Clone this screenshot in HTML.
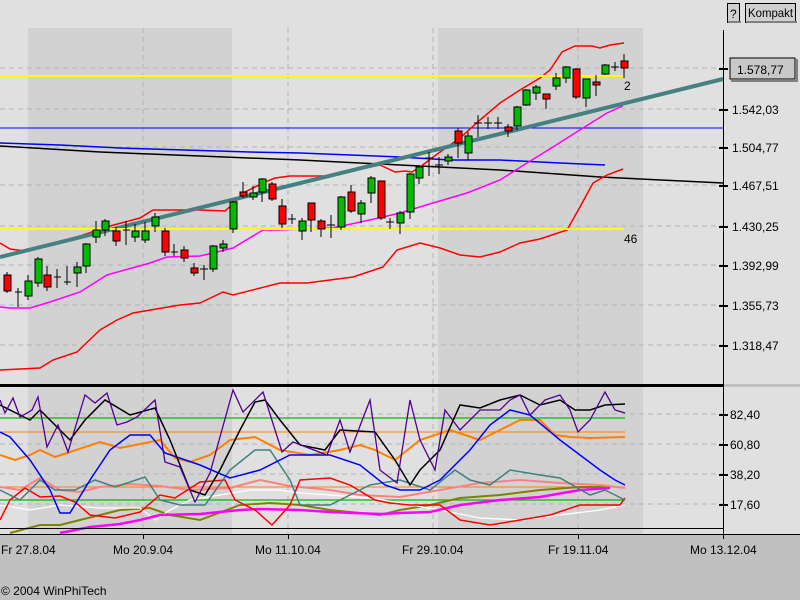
<!DOCTYPE html>
<html><head><meta charset="utf-8"><style>
html,body{margin:0;padding:0;width:800px;height:600px;overflow:hidden;background:#e0e0e0}
svg{display:block}
text{font-family:"Liberation Sans",sans-serif;font-size:12px;fill:#000}
</style></head><body>
<svg width="800" height="600" viewBox="0 0 800 600" shape-rendering="crispEdges">
<rect x="0" y="0" width="800" height="600" fill="#e0e0e0"/>
<rect x="28" y="28" width="204" height="506" fill="#d2d2d2"/>
<rect x="438" y="28" width="205" height="506" fill="#d2d2d2"/>
<rect x="0" y="535" width="800" height="65" fill="#c0c0c0"/>
<g stroke="#b4b4b4" stroke-dasharray="5,4" stroke-width="1">
<line x1="0" y1="68" x2="723" y2="68"/><line x1="0" y1="109" x2="723" y2="109"/><line x1="0" y1="147" x2="723" y2="147"/><line x1="0" y1="185" x2="723" y2="185"/><line x1="0" y1="226" x2="723" y2="226"/><line x1="0" y1="265" x2="723" y2="265"/><line x1="0" y1="305" x2="723" y2="305"/><line x1="0" y1="345" x2="723" y2="345"/>
<line x1="0" y1="414" x2="723" y2="414"/><line x1="0" y1="444" x2="723" y2="444"/><line x1="0" y1="474" x2="723" y2="474"/><line x1="0" y1="504" x2="723" y2="504"/>
<line x1="143" y1="28" x2="143" y2="534"/><line x1="288" y1="28" x2="288" y2="534"/><line x1="433" y1="28" x2="433" y2="534"/><line x1="578" y1="28" x2="578" y2="534"/>
</g>
<g fill="none" shape-rendering="auto">
<line x1="0" y1="128" x2="723" y2="128" stroke="#0000ff" stroke-width="1"/>
<polyline points="0,143 60,145 120,148 250,152 300,153 400,157 450,160 500,160 560,163 605,165" stroke="#0000ff" stroke-width="1.5"/>
<polyline points="0,146 100,152 200,156 300,160 400,165 500,170 600,177 723,183" stroke="#000" stroke-width="1.5"/>
<polyline points="0,243 10,249 25,251 45,246 80,236 110,226 140,218 153,210 200,210 225,211 232,205 245,192 265,182 275,178 290,176 325,176 380,165 395,172 405,171 412,172 420,167 440,152 460,138 480,120 500,103 520,90 540,78 550,70 562,52 575,46 592,46 600,48 610,45 624,43" stroke="#ff0000" stroke-width="1.5"/>
<polyline points="0,370 40,368 53,360 77,352 100,330 117,320 133,313 180,305 200,303 223,292 233,295 280,283 307,283 353,277 383,267 397,250 420,243 440,248 460,255 480,257 500,252 520,243 540,239 567,230 580,207 593,183 607,175 623,169" stroke="#ff0000" stroke-width="1.5"/>
<polyline points="0,307 10,308 30,308 50,302 80,292 107,275 150,263 167,257 200,256 233,248 263,230 277,230 333,228 383,217 400,213 433,203 467,193 500,180 527,163 553,147 583,128 607,113 623,106" stroke="#ff00ff" stroke-width="1.5"/>
<line x1="0" y1="257" x2="723" y2="79" stroke="#468080" stroke-width="4"/>
<line x1="0" y1="76" x2="624" y2="76" stroke="#ffff00" stroke-width="2"/>
<line x1="0" y1="229" x2="624" y2="229" stroke="#ffff00" stroke-width="2"/>
</g>
<g stroke="#000" stroke-width="1">
<line x1="7" y1="272" x2="7" y2="293"/><rect x="4" y="275" width="7" height="16" fill="#f00"/>
<line x1="18" y1="288" x2="18" y2="307"/><line x1="15" y1="292" x2="22" y2="292"/>
<line x1="28" y1="275" x2="28" y2="300"/><rect x="25" y="281" width="7" height="15" fill="#0b0"/>
<line x1="38" y1="257" x2="38" y2="287"/><rect x="35" y="259" width="7" height="24" fill="#0b0"/>
<line x1="47" y1="266" x2="47" y2="291"/><rect x="44" y="275" width="7" height="12" fill="#f00"/>
<line x1="57" y1="269" x2="57" y2="288"/><line x1="54" y1="277" x2="61" y2="277"/>
<line x1="67" y1="266" x2="67" y2="285"/><line x1="64" y1="282" x2="71" y2="282"/>
<line x1="77" y1="262" x2="77" y2="287"/><rect x="74" y="267" width="7" height="6" fill="#0b0"/>
<line x1="86" y1="243" x2="86" y2="273"/><rect x="83" y="244" width="7" height="22" fill="#0b0"/>
<line x1="96" y1="221" x2="96" y2="243"/><rect x="93" y="230" width="7" height="7" fill="#0b0"/>
<line x1="105" y1="219" x2="105" y2="236"/><rect x="102" y="221" width="7" height="9" fill="#0b0"/>
<line x1="116" y1="227" x2="116" y2="246"/><rect x="113" y="231" width="7" height="10" fill="#f00"/>
<line x1="126" y1="221" x2="126" y2="245"/><line x1="123" y1="230" x2="130" y2="230"/>
<line x1="135" y1="224" x2="135" y2="242"/><rect x="132" y="231" width="7" height="6" fill="#0b0"/>
<line x1="145" y1="222" x2="145" y2="243"/><rect x="142" y="231" width="7" height="9" fill="#0b0"/>
<line x1="155" y1="213" x2="155" y2="232"/><rect x="152" y="217" width="7" height="9" fill="#0b0"/>
<line x1="165" y1="228" x2="165" y2="256"/><rect x="162" y="231" width="7" height="21" fill="#f00"/>
<line x1="174" y1="244" x2="174" y2="256"/><line x1="171" y1="252" x2="178" y2="252"/>
<line x1="184" y1="246" x2="184" y2="262"/><rect x="181" y="250" width="7" height="8" fill="#f00"/>
<line x1="194" y1="263" x2="194" y2="276"/><rect x="191" y="268" width="7" height="5" fill="#f00"/>
<line x1="204" y1="265" x2="204" y2="280"/><line x1="200" y1="269" x2="208" y2="269"/>
<line x1="213" y1="245" x2="213" y2="272"/><rect x="210" y="246" width="7" height="23" fill="#0b0"/>
<line x1="223" y1="240" x2="223" y2="252"/><rect x="220" y="244" width="7" height="4" fill="#0b0"/>
<line x1="233" y1="201" x2="233" y2="233"/><rect x="230" y="202" width="7" height="27" fill="#0b0"/>
<line x1="243" y1="182" x2="243" y2="198"/><rect x="240" y="192" width="7" height="4" fill="#f00"/>
<line x1="253" y1="186" x2="253" y2="200"/><rect x="250" y="193" width="7" height="4" fill="#0b0"/>
<line x1="262" y1="178" x2="262" y2="202"/><rect x="259" y="179" width="7" height="13" fill="#0b0"/>
<line x1="272" y1="182" x2="272" y2="201"/><rect x="269" y="184" width="7" height="15" fill="#f00"/>
<line x1="282" y1="199" x2="282" y2="228"/><rect x="279" y="206" width="7" height="18" fill="#f00"/>
<line x1="292" y1="214" x2="292" y2="224"/><line x1="288" y1="219" x2="296" y2="219"/>
<line x1="302" y1="218" x2="302" y2="240"/><rect x="299" y="221" width="7" height="10" fill="#0b0"/>
<line x1="311" y1="203" x2="311" y2="232"/><rect x="308" y="203" width="7" height="17" fill="#f00"/>
<line x1="321" y1="219" x2="321" y2="237"/><rect x="318" y="221" width="7" height="8" fill="#f00"/>
<line x1="331" y1="215" x2="331" y2="238"/><line x1="327" y1="225" x2="335" y2="225"/>
<line x1="341" y1="196" x2="341" y2="230"/><rect x="338" y="197" width="7" height="30" fill="#0b0"/>
<line x1="351" y1="185" x2="351" y2="213"/><rect x="348" y="192" width="7" height="19" fill="#f00"/>
<line x1="361" y1="200" x2="361" y2="223"/><rect x="358" y="203" width="7" height="11" fill="#0b0"/>
<line x1="371" y1="176" x2="371" y2="203"/><rect x="368" y="178" width="7" height="15" fill="#0b0"/>
<line x1="381" y1="181" x2="381" y2="220"/><rect x="378" y="181" width="7" height="37" fill="#f00"/>
<line x1="390" y1="218" x2="390" y2="229"/><line x1="386" y1="222" x2="394" y2="222"/>
<line x1="400" y1="211" x2="400" y2="234"/><rect x="397" y="213" width="7" height="10" fill="#0b0"/>
<line x1="410" y1="173" x2="410" y2="219"/><rect x="407" y="174" width="7" height="38" fill="#0b0"/>
<line x1="419" y1="166" x2="419" y2="184"/><rect x="416" y="167" width="7" height="11" fill="#0b0"/>
<line x1="429" y1="152" x2="429" y2="176"/><line x1="425" y1="158" x2="433" y2="158"/>
<line x1="439" y1="157" x2="439" y2="174"/><line x1="435" y1="165" x2="443" y2="165"/>
<line x1="448" y1="154" x2="448" y2="165"/><rect x="445" y="157" width="7" height="4" fill="#0b0"/>
<line x1="458" y1="128" x2="458" y2="158"/><rect x="455" y="131" width="7" height="12" fill="#f00"/>
<line x1="468" y1="132" x2="468" y2="160"/><rect x="465" y="136" width="7" height="17" fill="#0b0"/>
<line x1="478" y1="115" x2="478" y2="137"/><line x1="474" y1="123" x2="482" y2="123"/>
<line x1="488" y1="117" x2="488" y2="129"/><line x1="484" y1="123" x2="492" y2="123"/>
<line x1="498" y1="117" x2="498" y2="129"/><line x1="494" y1="123" x2="502" y2="123"/>
<line x1="508" y1="124" x2="508" y2="137"/><rect x="505" y="127" width="7" height="4" fill="#f00"/>
<line x1="517" y1="106" x2="517" y2="130"/><rect x="514" y="107" width="7" height="19" fill="#0b0"/>
<line x1="526" y1="89" x2="526" y2="106"/><rect x="523" y="90" width="7" height="15" fill="#0b0"/>
<line x1="536" y1="85" x2="536" y2="100"/><rect x="533" y="87" width="7" height="6" fill="#0b0"/>
<line x1="546" y1="94" x2="546" y2="109"/><rect x="543" y="94" width="7" height="5" fill="#f00"/>
<line x1="556" y1="73" x2="556" y2="90"/><rect x="553" y="78" width="7" height="8" fill="#0b0"/>
<line x1="566" y1="66" x2="566" y2="83"/><rect x="563" y="67" width="7" height="11" fill="#0b0"/>
<line x1="576" y1="68" x2="576" y2="99"/><rect x="573" y="69" width="7" height="28" fill="#f00"/>
<line x1="586" y1="79" x2="586" y2="107"/><rect x="583" y="79" width="7" height="19" fill="#0b0"/>
<line x1="596" y1="75" x2="596" y2="96"/><rect x="593" y="82" width="7" height="3" fill="#f00"/>
<line x1="605" y1="64" x2="605" y2="75"/><rect x="602" y="65" width="7" height="9" fill="#0b0"/>
<line x1="615" y1="62" x2="615" y2="71"/><line x1="611" y1="67" x2="619" y2="67"/>
<line x1="624" y1="54" x2="624" y2="78"/><rect x="621" y="61" width="7" height="7" fill="#f00"/>
</g>
<text x="624" y="90">2</text>
<text x="624" y="243">46</text>
<g fill="none" stroke-width="1.3" shape-rendering="auto">
<line x1="0" y1="418" x2="625" y2="418" stroke="#00c000"/>
<line x1="0" y1="500" x2="625" y2="500" stroke="#00c000"/>
<line x1="0" y1="432" x2="625" y2="432" stroke="#ff8000" stroke-width="1"/>
<line x1="0" y1="487" x2="625" y2="487" stroke="#ff8000" stroke-width="1"/>
<polyline stroke="#808000" stroke-width="2" points="10,533 40,525 60,525 80,520 120,510 150,508 170,515 200,520 240,505 270,503 300,505 330,510 380,515 400,510 430,505 460,498 500,495 540,490 580,487 610,487"/>
<polyline stroke="#ffffff" points="0,505 30,510 60,505 100,508 140,508 155,520 170,510 190,500 220,495 250,490 280,490 300,493 330,495 370,498 400,503 440,510 480,518 520,520 560,515 600,510 625,505"/>
<polyline stroke="#ff8080" stroke-width="2" points="0,487 20,490 40,478 60,490 80,492 100,487 130,484 160,486 190,490 230,488 260,480 290,486 330,490 360,495 400,497 440,490 480,483 520,480 560,483 600,485 625,488"/>
<polyline stroke="#ff00ff" stroke-width="2.5" points="60,533 90,527 120,524 140,520 160,515 200,514 240,510 260,509 300,510 330,512 380,514 400,513 430,512 460,505 500,500 540,497 580,490 610,488"/>
<polyline stroke="#ff0000" stroke-width="1.5" points="0,520 10,500 25,488 40,497 60,496 75,502 90,515 115,518 140,512 160,495 175,498 200,482 225,480 235,500 255,510 272,525 290,505 300,480 330,478 350,485 375,500 390,503 410,505 440,505 460,520 490,525 520,520 550,515 580,505 600,505 620,505 625,498"/>
<polyline stroke="#408080" stroke-width="1.5" points="0,490 20,500 40,480 55,490 75,490 95,480 115,487 145,477 160,500 180,505 205,505 230,470 255,450 270,450 290,480 300,505 330,505 350,495 370,485 400,480 430,490 455,470 470,480 490,485 510,470 540,475 560,478 590,495 605,490 615,495 625,500"/>
<polyline stroke="#ff8000" stroke-width="2" points="0,455 15,460 30,455 40,450 55,457 100,442 110,445 120,448 160,440 175,458 190,462 210,455 230,440 255,437 280,450 310,455 340,450 360,445 375,450 395,460 420,440 450,430 480,440 500,430 520,420 540,420 555,435 570,437 590,438 625,437"/>
<polyline stroke="#0000ff" stroke-width="1.5" points="0,432 10,437 30,460 50,490 60,513 70,513 90,480 110,450 130,435 150,435 165,453 200,465 230,478 260,470 290,455 330,455 360,465 385,485 400,490 420,490 440,480 470,450 490,425 510,410 530,415 560,440 580,455 600,470 615,480 625,485"/>
<polyline stroke="#000000" stroke-width="1.5" points="0,405 30,420 40,410 60,430 70,440 85,420 105,400 130,415 155,408 170,440 190,490 205,495 220,470 240,430 255,402 265,400 280,420 300,445 325,450 340,430 375,432 395,460 410,485 420,470 440,450 460,405 480,408 500,400 520,395 540,405 560,400 575,410 590,410 605,405 625,404"/>
<polyline stroke="#500090" stroke-width="1.3" points="0,400 5,413 13,398 20,417 32,410 38,397 47,447 58,425 68,452 85,395 95,403 107,393 117,425 127,422 137,417 155,400 165,462 180,467 195,502 210,473 233,390 243,412 263,392 282,452 293,442 327,455 340,420 350,452 370,400 380,470 397,483 410,400 420,440 435,470 445,410 460,430 480,410 500,410 510,400 520,395 530,415 545,400 560,395 570,410 578,432 590,420 605,392 615,410 625,413"/>
</g>
<rect x="0" y="384" width="723" height="3" fill="#000"/>
<rect x="723" y="384" width="77" height="3" fill="#c0c0c0"/>
<rect x="0" y="528" width="723" height="1" fill="#000"/>
<rect x="0" y="534" width="800" height="1" fill="#000"/>
<rect x="723" y="30" width="1" height="505" fill="#000"/>
<g fill="#000">
<rect x="719" y="68" width="9" height="2"/><rect x="719" y="109" width="9" height="2"/><rect x="719" y="147" width="9" height="2"/><rect x="719" y="185" width="9" height="2"/><rect x="719" y="226" width="9" height="2"/><rect x="719" y="265" width="9" height="2"/><rect x="719" y="305" width="9" height="2"/><rect x="719" y="345" width="9" height="2"/>
<rect x="719" y="414" width="9" height="2"/><rect x="719" y="444" width="9" height="2"/><rect x="719" y="474" width="9" height="2"/><rect x="719" y="504" width="9" height="2"/>
<rect x="143" y="534" width="1" height="5"/><rect x="288" y="534" width="1" height="5"/><rect x="578" y="534" width="1" height="5"/><rect x="723" y="534" width="1" height="5"/>
</g>
<rect x="730" y="58" width="65" height="21" fill="#c8c8c8" stroke="#000" stroke-width="1"/>
<rect x="731" y="80" width="66" height="2" fill="#808080"/><rect x="796" y="59" width="2" height="23" fill="#808080"/>
<text x="737" y="74" font-size="11.5">1.578,77</text>
<g font-size="11.5">
<text x="732" y="114" font-size="11.5">1.542,03</text>
<text x="732" y="152" font-size="11.5">1.504,77</text>
<text x="732" y="190" font-size="11.5">1.467,51</text>
<text x="732" y="231" font-size="11.5">1.430,25</text>
<text x="732" y="270" font-size="11.5">1.392,99</text>
<text x="732" y="310" font-size="11.5">1.355,73</text>
<text x="732" y="350" font-size="11.5">1.318,47</text>
<text x="730" y="419" font-size="11.5">82,40</text>
<text x="730" y="449" font-size="11.5">60,80</text>
<text x="730" y="479" font-size="11.5">38,20</text>
<text x="730" y="509" font-size="11.5">17,60</text>
</g>
<rect x="727.5" y="3.5" width="12" height="19" fill="#d0d0d0" stroke="#000"/>
<rect x="745.5" y="3.5" width="50" height="19" fill="#d0d0d0" stroke="#000"/>
<rect x="728" y="21" width="13" height="2" fill="#808080"/><rect x="746" y="21" width="51" height="2" fill="#808080"/>
<text x="730" y="18" font-size="11">?</text>
<text x="748" y="17" font-size="11" textLength="45" lengthAdjust="spacingAndGlyphs">Kompakt</text>
<text x="1" y="554" font-size="11">Fr 27.8.04</text>
<text x="113" y="554" font-size="11">Mo 20.9.04</text>
<text x="255" y="554" font-size="11">Mo 11.10.04</text>
<text x="402" y="554" font-size="11">Fr 29.10.04</text>
<text x="548" y="554" font-size="11">Fr 19.11.04</text>
<text x="690" y="554" font-size="11">Mo 13.12.04</text>
<text x="1" y="595" font-size="11">© 2004 WinPhiTech</text>
</svg>
</body></html>
